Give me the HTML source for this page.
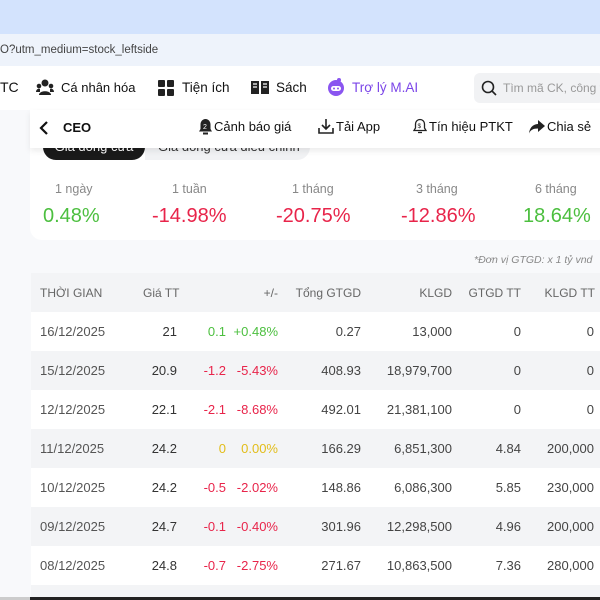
<!DOCTYPE html><html><head><meta charset="utf-8"><style>
*{margin:0;padding:0;box-sizing:border-box}
body{width:600px;height:600px;overflow:hidden;background:#f8f9fb;font-family:"Liberation Sans","Noto Sans CJK SC",sans-serif;position:relative;color:#222}
.a{position:absolute;white-space:nowrap}
.r{text-align:right}
.g{color:#4cbf3f}.d{color:#e8244a}.y{color:#e2bd1a}
</style></head><body>
<div class="a" style="left:0;top:0;width:600px;height:34px;background:#d3e3fd"></div>
<div class="a" style="left:0;top:34px;width:600px;height:32px;background:#eef3fb;font-size:11.5px;color:#444;line-height:32px;padding-left:0">O?utm_medium=stock_leftside</div>
<div class="a" style="left:0;top:66px;width:600px;height:44px;background:#fff"></div>
<div class="a" style="left:0;top:79px;font-size:14px;color:#111">TC</div>
<svg class="a" style="left:36px;top:79px" width="18" height="17" viewBox="0 0 18 17"><circle cx="9" cy="4" r="3.5" fill="#222"/><circle cx="3" cy="7" r="2.3" fill="#222"/><circle cx="15" cy="7" r="2.3" fill="#222"/><path d="M3 16c0-5 12-5 12 0z" fill="#222"/><path d="M0 13c0-3 3-4 4-3v3zM18 13c0-3-3-4-4-3v3z" fill="#222"/></svg>
<div class="a" style="left:61px;top:80px;font-size:13px;color:#111">Cá nhân hóa</div>
<svg class="a" style="left:158px;top:80px" width="16" height="16"><rect x="0" y="0" width="7" height="7" rx="1" fill="#222"/><rect x="9" y="0" width="7" height="7" rx="1" fill="#222"/><rect x="0" y="9" width="7" height="7" rx="1" fill="#222"/><rect x="9" y="9" width="7" height="7" rx="1" fill="#222"/></svg>
<div class="a" style="left:182px;top:80px;font-size:13.5px;color:#111">Tiện ích</div>
<svg class="a" style="left:251px;top:80px" width="18" height="15"><path d="M0 1h8v13H0zM10 1h8v13h-8z" fill="#222"/><path d="M2 4h4M2 7h4M12 4h4M12 7h4" stroke="#fff" stroke-width="1.2"/></svg>
<div class="a" style="left:276px;top:80px;font-size:13.5px;color:#111">Sách</div>
<svg class="a" style="left:326px;top:77px" width="20" height="20"><circle cx="10" cy="11" r="8" fill="#8a55f0"/><circle cx="13" cy="3" r="2" fill="#8a55f0"/><rect x="5" y="9" width="10" height="5" rx="2.5" fill="#fff"/><circle cx="8" cy="11.5" r="1" fill="#8a55f0"/><circle cx="12" cy="11.5" r="1" fill="#8a55f0"/></svg>
<div class="a" style="left:352px;top:80px;font-size:13.5px;color:#7b45e8">Trợ lý M.AI</div>
<div class="a" style="left:474px;top:73px;width:130px;height:30px;background:#f1f2f4;border-radius:6px"></div>
<svg class="a" style="left:481px;top:80px" width="16" height="16"><circle cx="7" cy="7" r="5.5" stroke="#222" stroke-width="1.6" fill="none"/><path d="M11 11l4 4" stroke="#222" stroke-width="1.6"/></svg>
<div class="a" style="left:503px;top:81px;font-size:12px;color:#999">Tìm mã CK, công ty</div>

<div class="a" style="left:30px;top:110px;width:580px;height:130px;background:#fff;border-radius:12px"></div>
<div class="a" style="left:43px;top:134px;width:102px;height:26px;background:#1a1a1a;border-radius:13px;color:#fff;font-size:13px;text-align:center;line-height:26px">Giá đóng cửa</div>
<div class="a" style="left:145px;top:134px;width:165px;height:26px;background:#f1f2f4;border-radius:0 13px 13px 0;color:#333;font-size:13px;line-height:26px;padding-left:13px">Giá đóng cửa điều chỉnh</div>
<div class="a" style="left:30px;top:110px;width:580px;height:38px;background:#fff;box-shadow:0 3px 6px rgba(0,0,0,.08)"></div>
<svg class="a" style="left:38px;top:120px" width="12" height="16"><path d="M9 2L3 8l6 6" stroke="#111" stroke-width="2.2" fill="none"/></svg>
<div class="a" style="left:63px;top:120px;font-size:13px;font-weight:bold;color:#111">CEO</div>
<svg class="a" style="left:198px;top:118px" width="15" height="17"><path d="M7.5 1c-3 0-5 2.5-5 5.5V11L1 13.5h13L12.5 11V6.5C12.5 3.5 10.5 1 7.5 1z" fill="#222"/><rect x="5" y="14.5" width="5" height="2" fill="#222"/><text x="5" y="11" font-size="7" fill="#fff" font-family="Liberation Sans">2</text></svg>
<div class="a" style="left:214px;top:119px;font-size:13px;color:#111">Cảnh báo giá</div>
<svg class="a" style="left:318px;top:118px" width="16" height="17"><path d="M8 1v10M4 7l4 4 4-4M1 10v5h14v-5" stroke="#222" stroke-width="1.6" fill="none"/></svg>
<div class="a" style="left:336px;top:119px;font-size:13px;color:#111">Tải App</div>
<svg class="a" style="left:413px;top:118px" width="14" height="16"><path d="M7 1.5c-2.5 0-4.5 2-4.5 4.5V10L1 12.5h12L11.5 10V6C11.5 3.5 9.5 1.5 7 1.5z" stroke="#222" stroke-width="1.3" fill="none"/><path d="M5 14.5h4" stroke="#222" stroke-width="1.3"/><text x="4.5" y="10" font-size="6.5" fill="#222" font-family="Liberation Sans">$</text></svg>
<div class="a" style="left:429px;top:119px;font-size:13px;color:#111">Tín hiệu PTKT</div>
<svg class="a" style="left:529px;top:120px" width="16" height="14"><path d="M9 0l7 6-7 6V8.5C4 8.5 1.5 10 0 13.5 0.5 8 3.5 4.5 9 4z" fill="#222"/></svg>
<div class="a" style="left:547px;top:119px;font-size:13px;color:#111">Chia sẻ</div>

<div class="a" style="left:55px;top:182px;font-size:12.5px;color:#888">1 ngày</div>
<div class="a g" style="left:43px;top:205px;font-size:20px">0.48%</div>
<div class="a" style="left:172px;top:182px;font-size:12.5px;color:#888">1 tuần</div>
<div class="a d" style="left:152px;top:205px;font-size:20px">-14.98%</div>
<div class="a" style="left:292px;top:182px;font-size:12.5px;color:#888">1 tháng</div>
<div class="a d" style="left:276px;top:205px;font-size:20px">-20.75%</div>
<div class="a" style="left:416px;top:182px;font-size:12.5px;color:#888">3 tháng</div>
<div class="a d" style="left:401px;top:205px;font-size:20px">-12.86%</div>
<div class="a" style="left:535px;top:182px;font-size:12.5px;color:#888">6 tháng</div>
<div class="a g" style="left:523px;top:205px;font-size:20px">18.64%</div>

<div class="a" style="left:474px;top:254px;font-size:10.5px;font-style:italic;color:#888">*Đơn vị GTGD: x 1 tỷ vnd</div>

<div class="a" style="left:31px;top:273px;width:580px;height:325px;background:#fff"></div>
<div class="a" style="left:31px;top:273px;width:580px;height:39px;background:#f3f4f6"></div>
<div class="a" style="left:31px;top:351px;width:580px;height:39px;background:#f3f4f6"></div>
<div class="a" style="left:31px;top:429px;width:580px;height:39px;background:#f3f4f6"></div>
<div class="a" style="left:31px;top:507px;width:580px;height:39px;background:#f3f4f6"></div>
<div class="a" style="left:31px;top:585px;width:580px;height:13px;background:#f3f4f6"></div>
<div class="a" style="left:0;top:597px;width:600px;height:3px;background:#222"></div>
<div class="a" style="left:0;top:597px;width:30px;height:3px;background:#ccc"></div>

<div style="position:absolute;left:0;top:273px;width:600px;font-size:12px;color:#666">
<div class="a" style="left:40px;top:13px">THỜI GIAN</div>
<div class="a" style="left:143px;top:13px">Giá TT</div>
<div class="a r" style="right:322px;top:13px">+/-</div>
<div class="a r" style="right:239px;top:13px">Tổng GTGD</div>
<div class="a r" style="right:148px;top:13px">KLGD</div>
<div class="a r" style="right:79px;top:13px">GTGD TT</div>
<div class="a r" style="right:5px;top:13px">KLGD TT</div>
</div>
<div id="rows"></div>
<script>
var d=[["16/12/2025","21","0.1","+0.48%","g","0.27","13,000","0","0"],
["15/12/2025","20.9","-1.2","-5.43%","d","408.93","18,979,700","0","0"],
["12/12/2025","22.1","-2.1","-8.68%","d","492.01","21,381,100","0","0"],
["11/12/2025","24.2","0","0.00%","y","166.29","6,851,300","4.84","200,000"],
["10/12/2025","24.2","-0.5","-2.02%","d","148.86","6,086,300","5.85","230,000"],
["09/12/2025","24.7","-0.1","-0.40%","d","301.96","12,298,500","4.96","200,000"],
["08/12/2025","24.8","-0.7","-2.75%","d","271.67","10,863,500","7.36","280,000"]];
var h="";d.forEach(function(r,i){var t=312+i*39+12;
h+='<div class="a" style="left:40px;top:'+t+'px;font-size:13px;color:#555">'+r[0]+'</div>'+
'<div class="a r" style="right:423px;top:'+t+'px;font-size:13px;color:#333">'+r[1]+'</div>'+
'<div class="a r '+r[4]+'" style="right:374px;top:'+t+'px;font-size:13px">'+r[2]+'</div>'+
'<div class="a r '+r[4]+'" style="right:322px;top:'+t+'px;font-size:13px">'+r[3]+'</div>'+
'<div class="a r" style="right:239px;top:'+t+'px;font-size:13px;color:#444">'+r[5]+'</div>'+
'<div class="a r" style="right:148px;top:'+t+'px;font-size:13px;color:#444">'+r[6]+'</div>'+
'<div class="a r" style="right:79px;top:'+t+'px;font-size:13px;color:#444">'+r[7]+'</div>'+
'<div class="a r" style="right:6px;top:'+t+'px;font-size:13px;color:#444">'+r[8]+'</div>';});
document.getElementById("rows").innerHTML=h;
</script>
</body></html>
